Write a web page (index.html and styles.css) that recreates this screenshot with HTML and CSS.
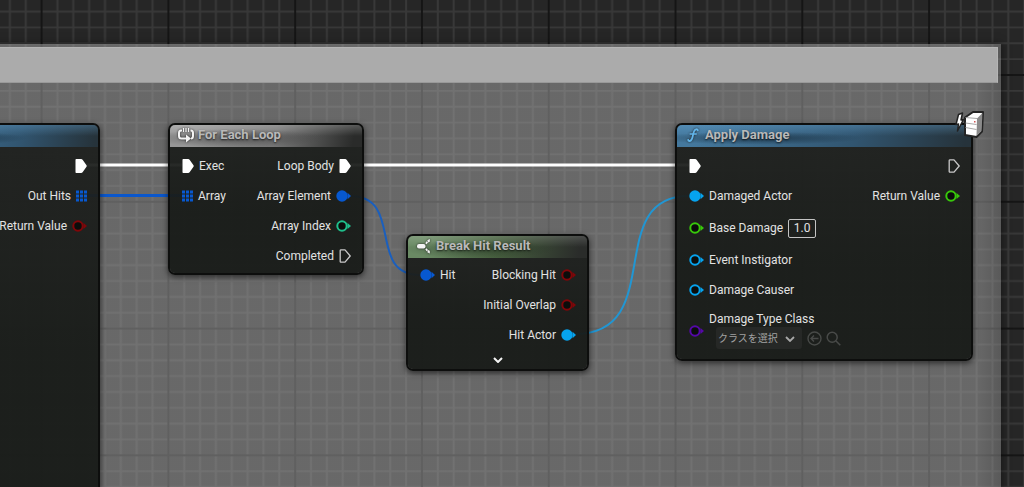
FILE: index.html
```html
<!DOCTYPE html>
<html lang="en">
<head>
<meta charset="utf-8">
<title>Blueprint Graph</title>
<meta name="viewport" content="width=device-width, initial-scale=1">
<link rel="stylesheet" href="styles.css">
</head>
<body>
<svg class="defs" aria-hidden="true">
  <symbol id="exec" viewBox="0 0 12 14"><path d="M1.2 0H6.2Q7 0 7.600 .7L11.500 6.300Q12 7 11.500 7.700L7.600 13.300Q7 14 6.200 14H1.200Q.5 14 .5 13.300V.7Q.5 0 1.200 0Z" fill="#fff"/></symbol>
  <symbol id="exec-open" viewBox="0 0 12 14"><path d="M1.200 1.500Q1.200 .8 2 .8H6L11.200 7L6 13.200H2Q1.200 13.200 1.200 12.500Z" fill="none" stroke="#c8c8c8" stroke-width="1.300" stroke-linejoin="round"/></symbol>
  <symbol id="pin" viewBox="0 0 15 12"><circle cx="6" cy="6" r="5.700" fill="currentColor"/><path d="M11.500 2.800L15 6L11.500 9.200Z" fill="currentColor"/></symbol>
  <symbol id="pin-open" viewBox="0 0 15 12"><circle cx="6" cy="6" r="4.700" fill="#0b0d0b" stroke="currentColor" stroke-width="2"/><path d="M11.500 3L15 6L11.500 9Z" fill="currentColor"/></symbol>
  <symbol id="array" viewBox="0 0 11 12"><path d="M0 .5h3v3H0zM4 .5h3v3H4zM8 .5h3v3H8zM0 4.500h3v3H0zM4 4.500h3v3H4zM8 4.500h3v3H8zM0 8.500h3v3H0zM4 8.500h3v3H4zM8 8.500h3v3H8z" fill="currentColor"/></symbol>
</svg>

<main class="graph">
  <svg class="layer" aria-hidden="true">
    <defs>
      <pattern id="cells" width="128" height="128" patternUnits="userSpaceOnUse" patternTransform="translate(41.600 75) scale(.9905)">
        <path d="M16 0V128M32 0V128M48 0V128M64 0V128M80 0V128M96 0V128M112 0V128M0 16H128M0 32H128M0 48H128M0 64H128M0 80H128M0 96H128M0 112H128" stroke="#383838" stroke-width="2"/>
        <path d="M0 0V128M128 0V128M0 0H128M0 128H128" stroke="#151515" stroke-width="2"/>
      </pattern>
    </defs>
    <rect width="100%" height="100%" fill="url(#cells)"/>
  </svg>

  <section class="comment" aria-label="Comment"><div class="comment-bar"></div></section>

  <svg class="layer" aria-hidden="true" fill="none">
    <path d="M86 165H182M351 165H689" stroke="#fff" stroke-width="3"/>
    <path d="M86 195.500H182" stroke="#0a57cc" stroke-width="3"/>
    <path d="M350 196C405 196 366 275 420 275" stroke="#1a5fbe" stroke-width="2"/>
    <path d="M575 334C668 334 602 196 689 196" stroke="#2196d3" stroke-width="2"/>
  </svg>

  <article class="node trace blue">
    <header class="head"></header>
    <div class="pins">
      <ul class="side out">
        <li class="row"><svg class="exec"><use href="#exec"/></svg></li>
        <li class="row">Out Hits<svg class="array struct"><use href="#array"/></svg></li>
        <li class="row">Return Value<svg class="pin bool"><use href="#pin-open"/></svg></li>
      </ul>
    </div>
  </article>

  <article class="node loop gray">
    <header class="head">
      <svg class="icon" viewBox="0 0 16 16" fill="none" stroke="#f4f4f4" stroke-width="2"><path d="M4 3.500H3Q1 3.500 1 6V9Q1 11.500 3.500 11.500H9M12.500 3.500H13Q15 3.500 15 6V9Q15 11.500 13 11.500"/><path d="M5.500 1V5M8 1V5M10.500 1V5" stroke-width="1.200"/><path d="M8 7.500L13 11.500L8 15.500Z" fill="#f4f4f4" stroke="none"/></svg>
      <h2 class="title">For Each Loop</h2>
    </header>
    <div class="pins">
      <ul class="side">
        <li class="row"><svg class="exec"><use href="#exec"/></svg>Exec</li>
        <li class="row"><svg class="array struct"><use href="#array"/></svg>Array</li>
      </ul>
      <ul class="side out">
        <li class="row">Loop Body<svg class="exec"><use href="#exec"/></svg></li>
        <li class="row">Array Element<svg class="pin struct"><use href="#pin"/></svg></li>
        <li class="row">Array Index<svg class="pin int"><use href="#pin-open"/></svg></li>
        <li class="row">Completed<svg class="exec"><use href="#exec-open"/></svg></li>
      </ul>
    </div>
  </article>

  <article class="node break green">
    <header class="head">
      <svg class="icon" viewBox="0 0 16 16" fill="none" stroke="#f4f4f4"><rect x="1" y="6" width="8.500" height="4.500" rx="2" fill="#f4f4f4" stroke="none"/><path d="M10 5.800L11.300 3.800M10 10.700L11.300 12.700" stroke-width="1.700"/><path d="M11.300 2.300L13.800 1V3.800L12 4.500ZM11.300 14.200L13.800 15.500V12.700L12 12Z" fill="#f4f4f4" stroke="none"/></svg>
      <h2 class="title">Break Hit Result</h2>
    </header>
    <div class="pins tight">
      <ul class="side">
        <li class="row"><svg class="pin struct"><use href="#pin"/></svg>Hit</li>
      </ul>
      <ul class="side out">
        <li class="row">Blocking Hit<svg class="pin bool"><use href="#pin-open"/></svg></li>
        <li class="row">Initial Overlap<svg class="pin bool"><use href="#pin-open"/></svg></li>
        <li class="row">Hit Actor<svg class="pin object"><use href="#pin"/></svg></li>
      </ul>
    </div>
    <button class="expand" type="button" aria-label="Show all pins"><svg class="caret" viewBox="0 0 10 6"><path d="M1 1L5 5L9 1" fill="none" stroke="#f4f4f4" stroke-width="2"/></svg></button>
  </article>

  <article class="node apply blue">
    <header class="head">
      <svg class="icon" viewBox="0 0 16 16" fill="none" stroke="#62b5ea" stroke-linecap="round"><path d="M12.800 3.300Q12.500 2 11 2.300C9 2.700 8.600 5 8 8C7.400 11.500 6.800 13.700 4.800 14Q3.400 14.200 3.200 13" stroke-width="1.800"/><path d="M5.200 7H11.200" stroke-width="1.600"/></svg>
      <h2 class="title">Apply Damage</h2>
    </header>
    <svg class="server" viewBox="0 0 32 32" aria-label="Server only" role="img">
      <path d="M5.500 5.500L9.500 4L8 11L10.500 10.500L4.500 22L5.500 15L3 15.500Z" fill="#fff" stroke="#222" stroke-width="1.500" stroke-linejoin="round"/>
      <path d="M12 8.500L20 3H30L29 22.500L23.500 28L12 26Z" fill="#fff" stroke="#242424" stroke-width="2" stroke-linejoin="round"/>
      <path d="M24 9.500L29.500 4L28.500 22L23.500 27Z" fill="#8a8a8a"/>
      <path d="M12.500 8.500L24 9.500M12.500 14L23.500 15.500M12.500 18.500L23.500 20.500" fill="none" stroke="#9c9c9c" stroke-width=".9"/>
      <path d="M21 12h1.500v1.500h-1.500z" fill="#cf5555"/>
    </svg>
    <div class="pins">
      <ul class="side">
        <li class="row"><svg class="exec"><use href="#exec"/></svg></li>
        <li class="row"><svg class="pin object"><use href="#pin"/></svg>Damaged Actor</li>
        <li class="row field"><svg class="pin float"><use href="#pin-open"/></svg><label for="base">Base Damage</label><input class="value" id="base" type="text" value="1.0"></li>
        <li class="row"><svg class="pin object"><use href="#pin-open"/></svg>Event Instigator</li>
        <li class="row"><svg class="pin object"><use href="#pin-open"/></svg>Damage Causer</li>
        <li class="row stack"><svg class="pin class"><use href="#pin-open"/></svg>
          <div>
            <label class="caption" for="type">Damage Type Class</label>
            <div class="picker">
              <span class="choice"><select class="select" id="type"><option>クラスを選択</option></select><svg class="caret over" viewBox="0 0 10 6"><path d="M1 1L5 5L9 1" fill="none" stroke="#a8a8a8" stroke-width="1.800"/></svg></span>
              <button class="tool" type="button" aria-label="Use selected class"><svg class="glyph" viewBox="0 0 15 15" fill="none" stroke="#484a48" stroke-width="1.400"><circle cx="7.500" cy="7.500" r="6.500"/><path d="M11.500 7.500H4M7 4.500L4 7.500L7 10.500"/></svg></button>
              <button class="tool" type="button" aria-label="Browse"><svg class="glyph" viewBox="0 0 15 15" fill="none" stroke="#484a48" stroke-width="1.500"><circle cx="6.200" cy="6.200" r="5"/><path d="M10 10L14.300 14.300"/></svg></button>
            </div>
          </div>
        </li>
      </ul>
      <ul class="side out">
        <li class="row"><svg class="exec"><use href="#exec-open"/></svg></li>
        <li class="row">Return Value<svg class="pin float"><use href="#pin-open"/></svg></li>
      </ul>
    </div>
  </article>
</main>
</body>
</html>
```
FILE: styles.css
```css
* { box-sizing: border-box; }
body { margin: 0; background: #262626; color: #e2e2e2; font: 12px/18px Roboto, "Noto Sans CJK JP", sans-serif; }
button, input, select { font: inherit; color: inherit; margin: 0; padding: 0; }
svg { display: block; flex: none; }
.defs { position: absolute; width: 0; height: 0; }

.graph { position: relative; height: 100vh; overflow: hidden; }
.layer { position: absolute; inset: 0; width: 100%; height: 100%; }

/* Comment region behind the nodes */
.comment {
  position: absolute; top: 44px; left: -20px; right: 23px; bottom: -20px;
  padding: 3px 3px 0 0;
  background: linear-gradient(to left, rgba(140, 140, 140, .5), rgba(170, 170, 170, .5) 24px);
  box-shadow: 0 0 8px rgba(0, 0, 0, .5);
}
.comment-bar { height: 36px; background: #ababab; border: 1px solid #b5b5b5; border-bottom-color: #999; }

/* Nodes */
.node {
  position: absolute; border: 2px solid #0d0e0d; border-radius: 7px;
  background: linear-gradient(rgba(31, 33, 31, .95), rgba(24, 27, 24, .95) 60%);
  background-clip: padding-box;
  box-shadow: 0 2px 6px rgba(0, 0, 0, .6);
}
.trace { left: -100px; top: 123px; width: 200px; bottom: -20px; }
.loop { left: 168px; top: 123px; width: 196px; }
.break { left: 406px; top: 234px; width: 183px; }
.apply { left: 675px; top: 123px; width: 298px; }

.head { display: flex; align-items: center; gap: 4px; height: 22px; padding: 0 8px 2px; border-radius: 5px 5px 0 0; }
.gray .head { background: radial-gradient(ellipse at 35% 60%, rgba(60, 60, 60, .6), transparent 50%), linear-gradient(to bottom, rgba(255, 255, 255, .22), transparent 50%), linear-gradient(100deg, #979797 10%, #767676 55%, #2a2b2a 95%); }
.green .head { background: radial-gradient(ellipse at 40% 60%, rgba(35, 50, 35, .5), transparent 50%), linear-gradient(to bottom, rgba(255, 255, 255, .16), transparent 50%), linear-gradient(100deg, #6a8a64 10%, #47603f 50%, #2a2c2a 95%); }
.blue .head { background: radial-gradient(ellipse at 28% 60%, rgba(20, 38, 52, .65), transparent 35%), linear-gradient(to bottom, rgba(120, 190, 240, .28), transparent 50%), linear-gradient(95deg, #44789d 5%, #315570 60%, #26333b 98%); }
.icon { width: 16px; height: 16px; filter: drop-shadow(0 0 1px #222); }
.title { margin: 0; font-size: 13px; line-height: 18px; font-weight: 700; color: #b9b9b9; text-shadow: 0 1px 2px rgba(0, 0, 0, .7); white-space: nowrap; }

.pins { display: flex; justify-content: space-between; padding: 4px 11px 2px 12px; }
.tight { padding-top: 2px; padding-bottom: 0; }
.side { margin: 0; padding: 0; list-style: none; }
.out { margin-left: auto; }
.row { display: flex; align-items: center; gap: 5px; height: 30px; white-space: nowrap; }
.out .row { justify-content: flex-end; }
.field { height: 34px; }
.stack { height: 52px; }
.exec { width: 12px; height: 14px; }
.array { width: 11px; height: 12px; }
.pin { width: 15px; height: 12px; }
.struct { color: #0758d0; }
.bool { color: #800609; }
.int { color: #1fbf8b; }
.object { color: #06a3ee; }
.float { color: #38c80b; }
.class { color: #5508a8; }

.value { width: 28px; height: 19px; text-align: center; background: transparent; border: 1px solid #c4c4c4; border-radius: 2px; }
.caption { display: block; line-height: 16px; }
.picker { display: flex; align-items: center; gap: 4px; height: 22px; padding-left: 7px; }
.stack .picker { margin-bottom: 2px; }
.choice { position: relative; margin-right: 1px; }
.select { display: block; width: 86px; height: 22px; padding-left: 2px; appearance: none; border: 0; border-radius: 3px; background: #262826; color: #a2a2a2; font: 10px/20px "Noto Sans CJK JP", sans-serif; }
.caret { width: 10px; height: 6px; }
.over { position: absolute; right: 7px; top: 9px; pointer-events: none; }
.tool, .expand { border: 0; background: none; }
.glyph { width: 15px; height: 15px; }
.expand { display: flex; align-items: center; justify-content: center; width: 100%; height: 19px; }
.server { position: absolute; right: -14px; top: -16px; width: 32px; height: 32px; }
```
